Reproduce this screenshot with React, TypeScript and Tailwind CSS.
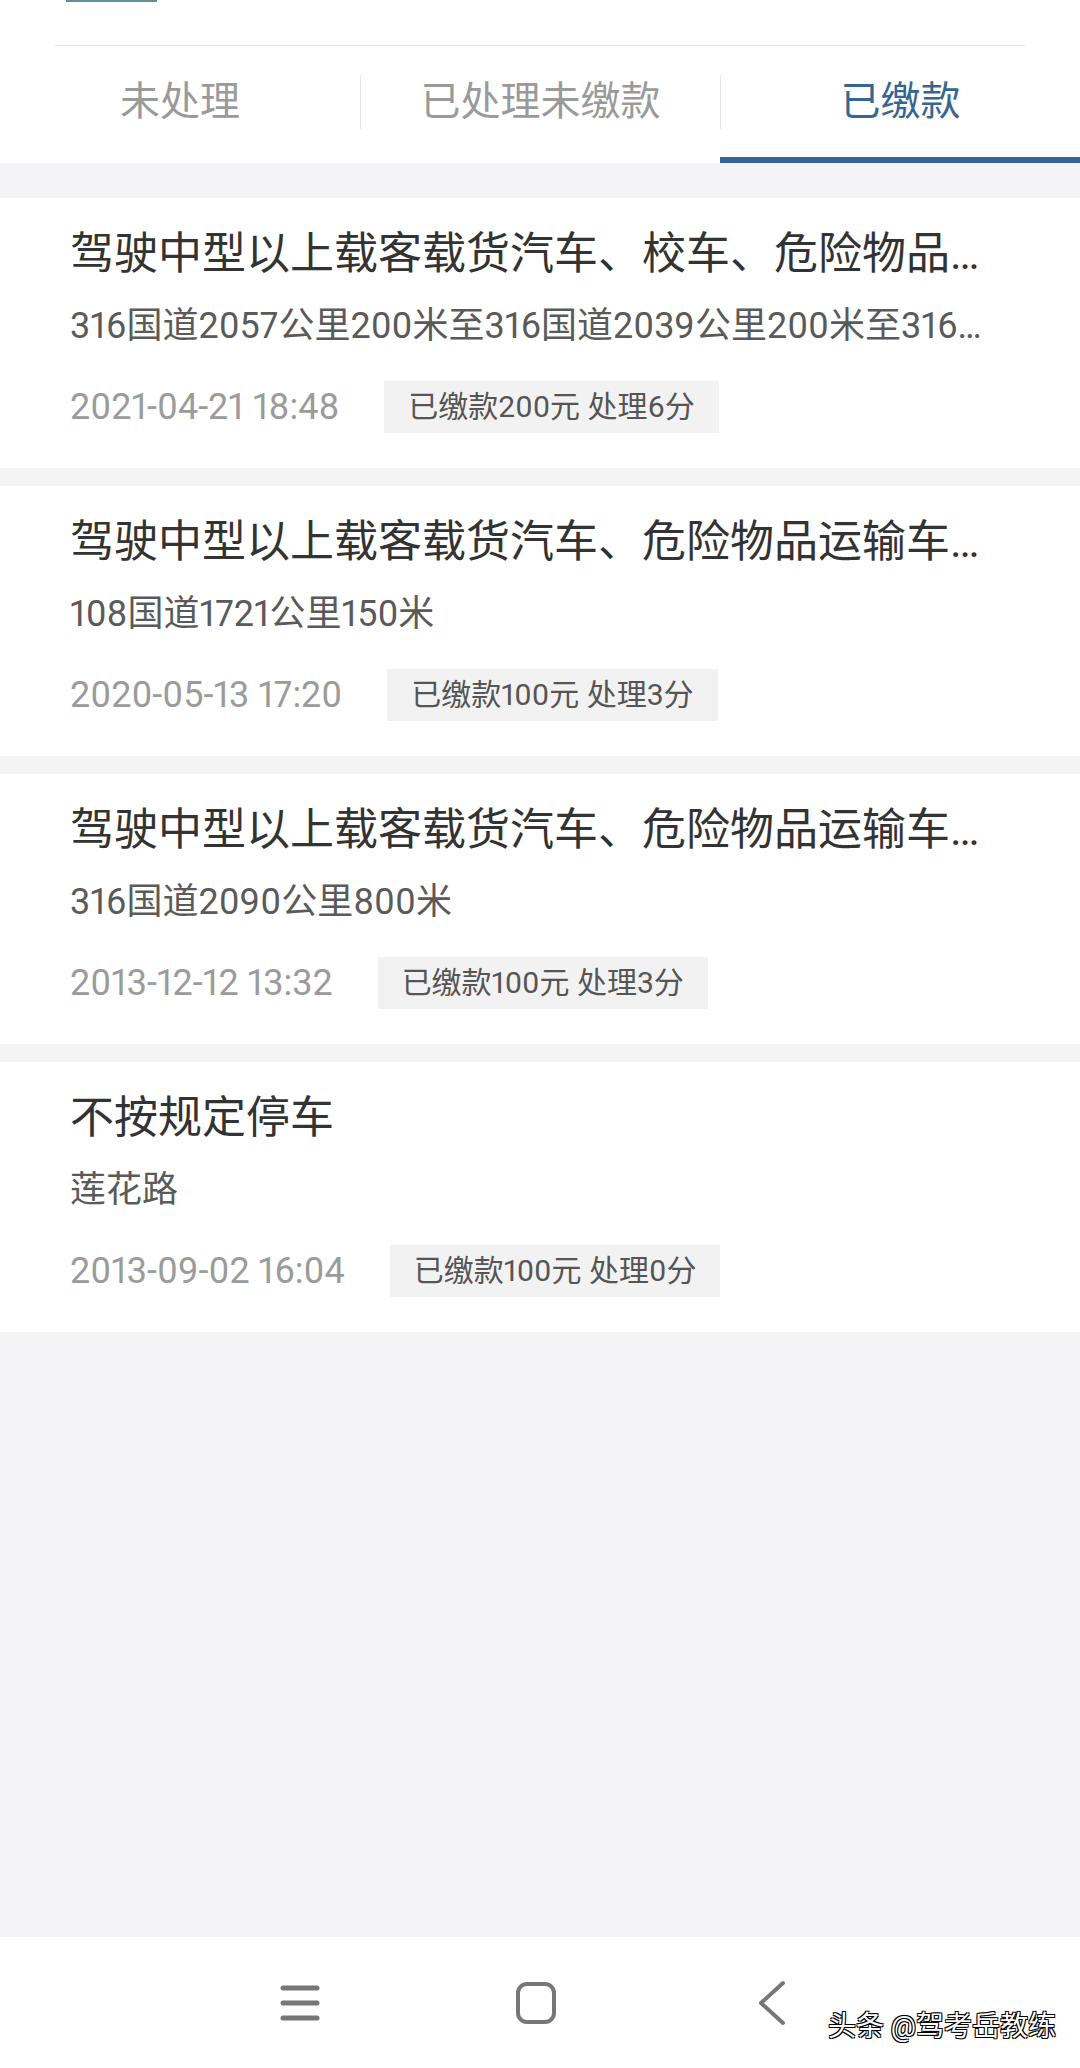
import React from "react";

type Record = {
  title: string;
  place: string;
  time: string;
  status: string;
};

const records: Record[] = [
  {
    title: "驾驶中型以上载客载货汽车、校车、危险物品运输车辆以外的其他机动车超过规定时速",
    place: "316国道2057公里200米至316国道2039公里200米至316国道2039公里",
    time: "2021-04-21 18:48",
    status: "已缴款200元 处理6分",
  },
  {
    title: "驾驶中型以上载客载货汽车、危险物品运输车辆以外的其他机动车超速",
    place: "108国道1721公里150米",
    time: "2020-05-13 17:20",
    status: "已缴款100元 处理3分",
  },
  {
    title: "驾驶中型以上载客载货汽车、危险物品运输车辆以外的其他机动车超速",
    place: "316国道2090公里800米",
    time: "2013-12-12 13:32",
    status: "已缴款100元 处理3分",
  },
  {
    title: "不按规定停车",
    place: "莲花路",
    time: "2013-09-02 16:04",
    status: "已缴款100元 处理0分",
  },
];

const tabs = ["未处理", "已处理未缴款", "已缴款"];
const active = 2;

function RecordCard({ r }: { r: Record }) {
  return (
    <div className="bg-white pl-[70px] pr-[80px] pt-[26px] pb-[35px] proportional-nums">
      <div className="text-[44px] leading-[60px] text-[#333333] whitespace-nowrap overflow-hidden text-ellipsis">
        {r.title}
      </div>
      <div className="mt-[18px] text-[36px] leading-[48px] text-[#5a5a5a] whitespace-nowrap overflow-hidden text-ellipsis">
        {r.place}
      </div>
      <div className="mt-[31px] flex items-center gap-[45px]">
        <span className="text-[36px] text-[#9b9b9b] leading-none">{r.time}</span>
        <span className="h-[52px] px-[24px] flex items-center bg-[#f2f2f3] text-[30px] text-[#555555] leading-none">
          {r.status}
        </span>
      </div>
    </div>
  );
}

export default function App() {
  return (
    <div
      className="w-[1080px] h-[2068px] flex flex-col bg-[#f4f4f7] overflow-hidden"
      style={{ fontFamily: 'Roboto, "Noto Sans CJK SC", sans-serif' }}
    >
      {/* 顶部标签栏 */}
      <div className="bg-white h-[163px] flex flex-col">
        <div className="ml-[66px] w-[91px] h-[2px] bg-[#5f9099]" />
        <div className="mt-[43px] mx-[55px] h-px bg-[#e3e3e3]" />
        <div className="flex flex-1">
          {tabs.map((t, i) => (
            <div key={t} className="flex-1 flex flex-col">
              <div className="flex-1 flex items-center">
                <div
                  className={`w-full h-[54px] flex items-center justify-center text-[40px] ${
                    i > 0 ? "border-l border-[#e6e6e6]" : ""
                  } ${i === active ? "text-[#356592]" : "text-[#9a9a9a]"}`}
                >
                  {t}
                </div>
              </div>
              <div className={`h-[6px] ${i === active ? "bg-[#356592]" : ""}`} />
            </div>
          ))}
        </div>
      </div>

      {/* 列表 */}
      <div className="flex-1 pt-[35px] flex flex-col gap-[18px]">
        {records.map((r, i) => (
          <RecordCard key={i} r={r} />
        ))}
      </div>

      {/* 底部导航 */}
      <div className="relative bg-white h-[131px] flex items-center justify-center pr-[8px]">
        <div className="w-[236px] flex justify-center">
          <svg width="40" height="40" viewBox="0 0 40 40">
            <g stroke="#777777" strokeWidth="5" strokeLinecap="round">
              <line x1="3" y1="5" x2="37" y2="5" />
              <line x1="3" y1="20" x2="37" y2="20" />
              <line x1="3" y1="35" x2="37" y2="35" />
            </g>
          </svg>
        </div>
        <div className="w-[236px] flex justify-center">
          <svg width="42" height="44" viewBox="0 0 42 44">
            <rect x="3" y="3" width="36" height="38" rx="9" fill="none" stroke="#777777" strokeWidth="4" />
          </svg>
        </div>
        <div className="w-[236px] flex justify-center">
          <svg width="30" height="46" viewBox="0 0 30 46">
            <polyline
              points="26,3 4,23 26,43"
              fill="none"
              stroke="#777777"
              strokeWidth="4"
              strokeLinecap="round"
              strokeLinejoin="round"
            />
          </svg>
        </div>
        <div className="absolute right-[24px] top-[76px] text-[28px] leading-none text-white [text-shadow:1px_1px_0_#000,-1px_-1px_0_#000,1px_-1px_0_#000,-1px_1px_0_#000]">
          头条 @驾考岳教练
        </div>
      </div>
    </div>
  );
}
